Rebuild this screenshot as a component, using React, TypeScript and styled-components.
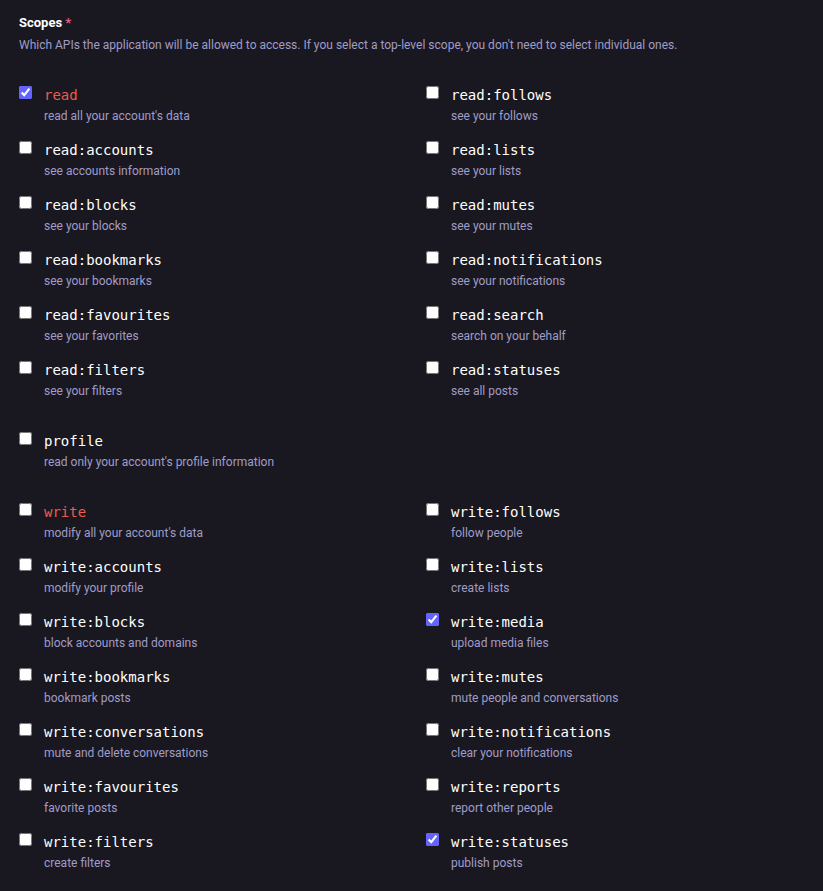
import React from "react";
import styled, { createGlobalStyle } from "styled-components";

const Global = createGlobalStyle`
  html, body { margin: 0; padding: 0; background: #191820; }
  body { font-family: Roboto, "Noto Sans", sans-serif; }
`;

const Page = styled.div`
  padding: 14px 19px 0 19px;
  width: 823px;
  height: 891px;
  box-sizing: border-box;
  overflow: hidden;
  background: #191820;
`;

const Title = styled.div`
  color: #ffffff;
  font-weight: 700;
  font-size: 13px;
  line-height: 18px;
`;

const Required = styled.span`
  color: #e0607c;
  margin-left: 3px;
`;

const Hint = styled.div`
  color: #a09cc8;
  font-size: 12px;
  line-height: 16px;
  margin-top: 5px;
`;

const Groups = styled.div`
  display: flex;
  flex-direction: column;
  gap: 16px;
  margin-top: 33px;
`;

const Grid = styled.div`
  display: grid;
  grid-template-columns: 407px 1fr;
`;

const Item = styled.label`
  display: flex;
  align-items: flex-start;
  gap: 12px;
  height: 55px;
`;

const Box = styled.input`
  margin: 0;
  width: 13px;
  height: 13px;
  accent-color: #6364ff;
  flex: none;
`;

const Texts = styled.div`
  display: flex;
  flex-direction: column;
`;

const Name = styled.span<{ $danger?: boolean }>`
  font-family: "DejaVu Sans Mono", "Liberation Mono", monospace;
  font-size: 14px;
  line-height: 18px;
  color: ${(p) => (p.$danger ? "#ef5a4c" : "#ffffff")};
`;

const Desc = styled.span`
  font-size: 12px;
  line-height: 16px;
  margin-top: 4px;
  color: #a09cc8;
`;

type Scope = { name: string; desc: string; checked?: boolean; danger?: boolean };

const readScopes: Scope[] = [
  { name: "read", desc: "read all your account's data", checked: true, danger: true },
  { name: "read:follows", desc: "see your follows" },
  { name: "read:accounts", desc: "see accounts information" },
  { name: "read:lists", desc: "see your lists" },
  { name: "read:blocks", desc: "see your blocks" },
  { name: "read:mutes", desc: "see your mutes" },
  { name: "read:bookmarks", desc: "see your bookmarks" },
  { name: "read:notifications", desc: "see your notifications" },
  { name: "read:favourites", desc: "see your favorites" },
  { name: "read:search", desc: "search on your behalf" },
  { name: "read:filters", desc: "see your filters" },
  { name: "read:statuses", desc: "see all posts" },
];

const profileScopes: Scope[] = [
  { name: "profile", desc: "read only your account's profile information" },
];

const writeScopes: Scope[] = [
  { name: "write", desc: "modify all your account's data", danger: true },
  { name: "write:follows", desc: "follow people" },
  { name: "write:accounts", desc: "modify your profile" },
  { name: "write:lists", desc: "create lists" },
  { name: "write:blocks", desc: "block accounts and domains" },
  { name: "write:media", desc: "upload media files", checked: true },
  { name: "write:bookmarks", desc: "bookmark posts" },
  { name: "write:mutes", desc: "mute people and conversations" },
  { name: "write:conversations", desc: "mute and delete conversations" },
  { name: "write:notifications", desc: "clear your notifications" },
  { name: "write:favourites", desc: "favorite posts" },
  { name: "write:reports", desc: "report other people" },
  { name: "write:filters", desc: "create filters" },
  { name: "write:statuses", desc: "publish posts", checked: true },
];

function ScopeItem({ s }: { s: Scope }) {
  return (
    <Item>
      <Box type="checkbox" defaultChecked={!!s.checked} />
      <Texts>
        <Name $danger={s.danger}>{s.name}</Name>
        <Desc>{s.desc}</Desc>
      </Texts>
    </Item>
  );
}

export default function App() {
  return (
    <Page>
      <Global />
      <Title>
        Scopes<Required>*</Required>
      </Title>
      <Hint>
        Which APIs the application will be allowed to access. If you select a top-level scope, you don't need to select individual ones.
      </Hint>
      <Groups>
        {[readScopes, profileScopes, writeScopes].map((g, i) => (
          <Grid key={i}>
            {g.map((s) => (
              <ScopeItem key={s.name} s={s} />
            ))}
          </Grid>
        ))}
      </Groups>
    </Page>
  );
}
